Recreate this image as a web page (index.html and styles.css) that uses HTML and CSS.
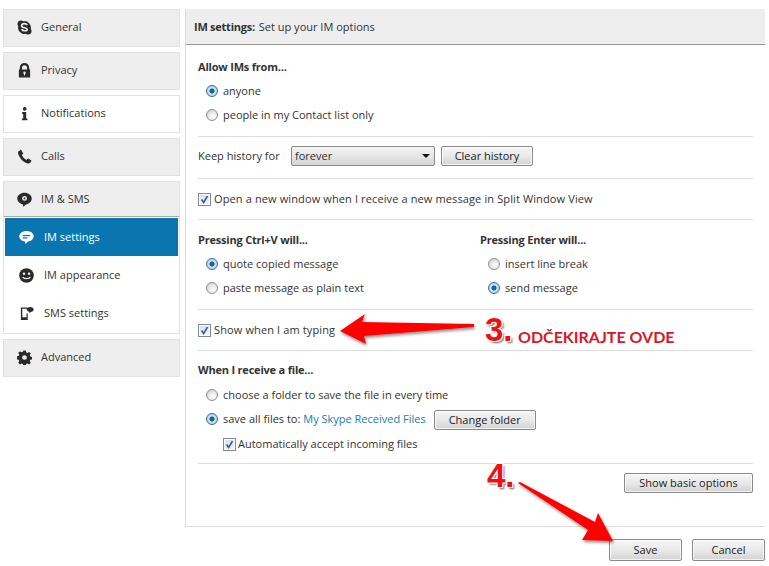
FILE: index.html
```html
<!DOCTYPE html>
<html lang="en">
<head>
<meta charset="utf-8">
<title>IM settings</title>
<link rel="stylesheet" href="styles.css">
</head>
<body>
<div class="app">
  <nav class="sidebar">
    <div class="nav-item">
      <svg class="ico" viewBox="0 0 16 16"><path d="M8 1.2a6.8 6.8 0 0 1 6.700 8c.5.8.8 1.500.8 2.300A3.900 3.900 0 0 1 11.600 15.500c-.8 0-1.600-.3-2.300-.8A6.800 6.800 0 0 1 1.300 6.700C.8 6 .5 5.200.5 4.400A3.900 3.900 0 0 1 4.400.5c.8 0 1.500.3 2.200.8z"/><path class="cut" d="M11 5.300C10.300 4.300 9.300 3.900 8 3.900c-1.800 0-3.100.8-3.100 2.200 0 2.900 6 1.600 6 3.900 0 .9-1 1.500-2.800 1.500-1.500 0-2.500-.5-3.200-1.600"/></svg>
      <span>General</span>
    </div>
    <div class="nav-item">
      <svg class="ico" viewBox="0 0 16 16"><path d="M3 7V5a5 5 0 0 1 10 0v2h1v8.500H2V7zm2.300 0h5.400V5a2.700 2.700 0 0 0-5.400 0z"/><circle class="hole" cx="8" cy="10.400" r="1.300"/><rect class="hole" x="7.400" y="10.500" width="1.200" height="2.700"/></svg>
      <span>Privacy</span>
    </div>
    <div class="nav-item is-white">
      <svg class="ico" viewBox="0 0 16 16"><circle cx="8.200" cy="3" r="2"/><path d="M5.500 6.500h4.300v6.800h1.300v2H5.200v-2h1.400V8.400H5.500z"/></svg>
      <span>Notifications</span>
    </div>
    <div class="nav-item">
      <svg class="ico" viewBox="0 0 16 16"><path d="M3.600 1 1.700 2.400C.9 3.100 1 4.600 1.700 6.300c1.700 4.100 5.100 7.600 8.700 8.800 1.600.5 2.900.4 3.600-.4l1.300-1.600c.2-.3.2-.7-.1-.9l-3-2c-.3-.2-.6-.2-.9.100l-1.200 1.300c-1.900-.8-4-3-4.900-5.200l1.200-1.100c.3-.3.3-.6.100-.9L4.500 1.100C4.300.8 3.900.8 3.600 1z"/></svg>
      <span>Calls</span>
    </div>
    <div class="nav-group">
      <div class="nav-item nav-head">
        <svg class="ico" viewBox="0 0 16 16"><path d="M8 .8c4.300 0 7.700 2.700 7.700 6.200s-3.100 5.700-6.200 6.300l-2.700 2.500-.6-2.600C3 12.400.3 10.200.3 7 .3 3.500 3.700.8 8 .8z"/><circle class="hole" cx="8" cy="6.800" r="2.600"/><circle cx="8" cy="6.800" r="1"/></svg>
        <span>IM &amp; SMS</span>
      </div>
      <div class="sub-list">
        <div class="sub-item is-active">
          <svg class="ico" viewBox="0 0 16 16"><path d="M8 1c4.200 0 7.700 2.300 7.700 5.700 0 3-3 5.200-6.200 5.600L7 15l-.6-2.700C3 11.900.3 9.800.3 6.700.3 3.300 3.800 1 8 1z"/><rect class="hole-blue" x="4" y="5.300" width="8" height="1.300"/><rect class="hole-blue" x="4" y="7.800" width="5" height="1.300"/></svg>
          <span>IM settings</span>
        </div>
        <div class="sub-item">
          <svg class="ico" viewBox="0 0 16 16"><circle cx="8" cy="8" r="7.800"/><circle class="hole" cx="5.300" cy="6" r="1.300"/><circle class="hole" cx="10.700" cy="6" r="1.300"/><path class="smile" d="M4 9.500c1 2.400 7 2.400 8 0"/></svg>
          <span>IM appearance</span>
        </div>
        <div class="sub-item">
          <svg class="ico" viewBox="0 0 16 16"><path d="M2 1.500h7v2.300H8V3H3.500v9H8V8h1.300v7H2zM5 13h1.400v1.100H5z"/><path d="M12 1c2 0 3.600 1.100 3.600 2.600S14.200 6 12.700 6.200L11.300 8l-.3-1.900C9.500 5.700 8.400 4.900 8.400 3.600 8.400 2.100 10 1 12 1z"/></svg>
          <span>SMS settings</span>
        </div>
      </div>
    </div>
    <div class="nav-item">
      <svg class="ico" viewBox="0 0 16 16"><path d="M6.700.5h2.600l.4 2 1.400.6 1.800-1.100 1.800 1.800-1.100 1.800.6 1.400 2 .4v2.600l-2 .4-.6 1.400 1.100 1.800-1.800 1.800-1.800-1.100-1.400.6-.4 2H6.700l-.4-2-1.400-.6-1.800 1.100-1.800-1.800 1.100-1.800-.6-1.400-2-.4V6.700l2-.4.600-1.400L1.300 3.100l1.800-1.800 1.800 1.100 1.400-.6z"/><circle class="hole" cx="8" cy="8" r="2.500"/></svg>
      <span>Advanced</span>
    </div>
  </nav>

  <main class="panel">
    <div class="panel-main">
      <header class="panel-head"><b>IM settings:</b> Set up your IM options</header>
      <div class="panel-body">
        <section class="sec sec-allow">
          <div class="row heading">Allow IMs from...</div>
          <div class="row indent"><i class="radio on"></i>anyone</div>
          <div class="row indent"><i class="radio"></i>people in my Contact list only</div>
        </section>
        <section class="sec sec-history">
          <div class="row">
            <span class="keep-label">Keep history for</span>
            <span class="select">forever<i class="caret"></i></span>
            <span class="btn btn-clear">Clear history</span>
          </div>
        </section>
        <section class="sec sec-pad">
          <div class="row wide"><i class="check"><svg viewBox="0 0 13 13"><path d="M3 6.500 5.500 10 10 2.500"/></svg></i>Open a new window when I receive a new message in Split Window View</div>
        </section>
        <section class="sec sec-paste">
          <div class="col">
            <div class="row heading">Pressing Ctrl+V will...</div>
            <div class="row indent"><i class="radio on"></i>quote copied message</div>
            <div class="row indent"><i class="radio"></i>paste message as plain text</div>
          </div>
          <div class="col">
            <div class="row heading">Pressing Enter will...</div>
            <div class="row indent"><i class="radio"></i>insert line break</div>
            <div class="row indent"><i class="radio on"></i>send message</div>
          </div>
        </section>
        <section class="sec sec-pad">
          <div class="row wide"><i class="check"><svg viewBox="0 0 13 13"><path d="M3 6.500 5.500 10 10 2.500"/></svg></i>Show when I am typing</div>
        </section>
        <section class="sec sec-file">
          <div class="row heading">When I receive a file...</div>
          <div class="row indent row-gap"><i class="radio"></i>choose a folder to save the file in every time</div>
          <div class="row indent"><i class="radio on"></i>save all files to:&nbsp;<span class="link">My Skype Received Files</span><span class="btn btn-folder">Change folder</span></div>
          <div class="row indent2 row-gap"><i class="check"><svg viewBox="0 0 13 13"><path d="M3 6.500 5.500 10 10 2.500"/></svg></i>Automatically accept incoming files</div>
        </section>
        <div class="basic-row"><span class="btn btn-basic">Show basic options</span></div>
      </div>
    </div>
    <footer class="panel-foot">
      <span class="btn btn-foot">Save</span>
      <span class="btn btn-foot">Cancel</span>
    </footer>
  </main>

  <svg class="arrows" viewBox="0 0 769 566" width="769" height="566">
    <defs><filter id="sh" x="-10%" y="-20%" width="120%" height="140%"><feDropShadow dx="1" dy="2" stdDeviation="1.500" flood-color="#000" flood-opacity=".45"/></filter></defs>
    <path class="arrow" d="M340 331 365 314 362 322 474 324 474 327 364 336 366 344z"/>
    <path class="arrow" d="M518 483 520 482 595 522 598 513 613 541 582 540 588 530z"/>
  </svg>
  <span class="step step-3">3.</span>
  <span class="note">ODČEKIRAJTE OVDE</span>
  <span class="step step-4">4.</span>
</div>
</body>
</html>
```

FILE: styles.css
```css
* { box-sizing: border-box; }
html, body { margin: 0; padding: 0; background: #fff; }
body {
  font-family: "Open Sans", "Noto Sans", sans-serif;
  font-size: 11px;
  color: #333;
  overflow: hidden;
}
.app {
  position: relative;
  width: 769px;
  height: 566px;
  display: flex;
  align-items: flex-start;
  padding: 9px 4px 0 3px;
  gap: 5px;
}

/* Sidebar */
.sidebar { width: 177px; display: flex; flex-direction: column; gap: 5px; flex: none; }
.nav-item {
  height: 38px;
  display: flex;
  align-items: center;
  gap: 9px;
  padding: 0 0 4px 13px;
  background: #eee;
  border: 1px solid #e2e2e2;
}
.nav-item.is-white { background: #fff; }
.nav-item .ico { margin-top: 2px; }
.nav-head { height: 36px; padding-bottom: 2px; border-bottom: 1px solid #aaa; }
.ico { width: 15px; height: 15px; flex: none; fill: #2a2a2a; }
.cut { fill: none; stroke: #eee; stroke-width: 1.700; }
.hole { fill: #eee; }
.smile { fill: none; stroke: #fff; stroke-width: 1.300; }
.is-white .hole, .sub-item .hole { fill: #fff; }
.nav-group { display: flex; flex-direction: column; }
.sub-list {
  height: 117px;
  padding: 1px 1px 0;
  background: #fff;
  border: 1px solid #e2e2e2;
  border-top: 0;
}
.sub-item {
  height: 38px;
  display: flex;
  align-items: center;
  gap: 10px;
  padding: 0 0 2px 14px;
}
.sub-item .ico { margin-top: 2px; }
.sub-item.is-active { background: #0a76b0; color: #fff; }
.is-active .ico { fill: #fff; }
.hole-blue { fill: #0a76b0; }

/* Panel */
.panel { width: 580px; flex: none; display: flex; flex-direction: column; }
.panel-main { height: 517px; border-left: 1px solid #ddd; display: flex; flex-direction: column; }
.panel-head {
  height: 36px;
  display: flex;
  align-items: center;
  gap: 4px;
  padding-left: 8px;
  background: #eee;
  border-bottom: 1px solid #999;
  flex: none;
}
.panel-head b { font-weight: 700; letter-spacing: -.25px; }
.panel-body { padding: 0 12px; flex: 1; }
.sec { border-bottom: 1px solid #ddd; }
.sec-allow { padding: 10px 0 9px; }
.sec-history { padding: 7px 0 10px; }
.sec-pad { padding: 8px 0; }
.sec-paste { padding: 8px 0 9px; display: flex; }
.sec-file { padding: 7px 0 7px; }
.col { width: 282px; flex: none; }
.row { height: 24px; display: flex; align-items: center; white-space: nowrap; padding-bottom: 2px; }
.row-gap { margin-top: 1px; }
.wide { letter-spacing: .12px; }
.heading { font-weight: 700; letter-spacing: -.2px; }
.indent { padding-left: 8px; }
.indent2 { padding-left: 25px; }
.indent2 .check { margin-right: 2px; }
.keep-label { width: 93px; }

/* Controls */
.radio {
  width: 12px; height: 12px; flex: none;
  margin: 2px 5px 0 0;
  border-radius: 50%;
  border: 1px solid #8f8f8f;
  background: radial-gradient(circle at 60% 65%, #fff 0, #e4e4e4 55%, #bdbdbd 100%);
}
.radio.on {
  border-color: #3a6f93;
  background: radial-gradient(circle, #0f6fa5 0, #0e6698 32%, #cfe3ef 40%, #a9c6d8 100%);
}
.check {
  width: 13px; height: 13px; flex: none;
  margin: 2px 3px 0 0;
  border: 1px solid #7c8ba0;
  background: linear-gradient(#d8deea, #f5f6fa);
  box-shadow: inset 0 0 0 1px #fff;
  display: block;
}
.check svg { display: block; width: 11px; height: 11px; fill: none; stroke: #3a5d97; stroke-width: 2; }
.select {
  position: relative;
  width: 144px; height: 20px;
  display: flex; align-items: center;
  margin-top: 2px;
  padding: 0 0 2px 3px;
  border: 1px solid #8a8a8a;
  border-radius: 2px;
  background: linear-gradient(#f4f4f4, #e6e6e6 50%, #d4d4d4);
}
.caret {
  position: absolute; right: 4px; top: 7px;
  border: 4px solid transparent;
  border-top: 4px solid #111;
  border-bottom: 0;
}
.btn {
  height: 20px;
  display: inline-flex; align-items: center; justify-content: center;
  padding-bottom: 2px;
  border: 1px solid #8a8a8a;
  border-radius: 2px;
  color: #222;
  background: linear-gradient(#f6f6f6, #e9e9e9 50%, #d3d3d3);
  box-shadow: inset 0 0 0 1px rgba(255,255,255,.7);
}
.btn-clear { width: 92px; margin: 2px 0 0 6px; }
.btn-folder { width: 102px; margin: 4px 0 0 8px; }
.link { color: #1d7cab; }
.basic-row { display: flex; justify-content: flex-end; padding-top: 9px; }
.btn-basic { width: 129px; }
.panel-foot {
  flex: none;
  height: 36px;
  border-top: 1px solid #ddd;
  display: flex;
  justify-content: flex-end;
  align-items: flex-start;
  gap: 10px;
  padding-top: 12px;
}
.btn-foot { width: 73px; height: 22px; }

/* Annotations over the screenshot */
.arrows { position: absolute; left: 0; top: 0; pointer-events: none; }
.arrow { fill: #f00; filter: url(#sh); }
.step {
  position: absolute;
  font-family: "Liberation Sans", sans-serif;
  font-weight: 700;
  font-size: 33px;
  line-height: 30px;
  color: #ee1111;
  text-shadow: 1px 1px 0 #fff, -1px -1px 0 #fff, 1px -1px 0 #fff, -1px 1px 0 #fff, 2px 2px 2px #666;
}
.step-3 { left: 485px; top: 315px; }
.step-4 { left: 487px; top: 461px; }
.note {
  position: absolute;
  left: 518px; top: 327px;
  font-family: Lato, sans-serif;
  font-weight: 700;
  font-size: 16px;
  line-height: 20px;
  color: #d7182a;
  white-space: nowrap;
}
```
